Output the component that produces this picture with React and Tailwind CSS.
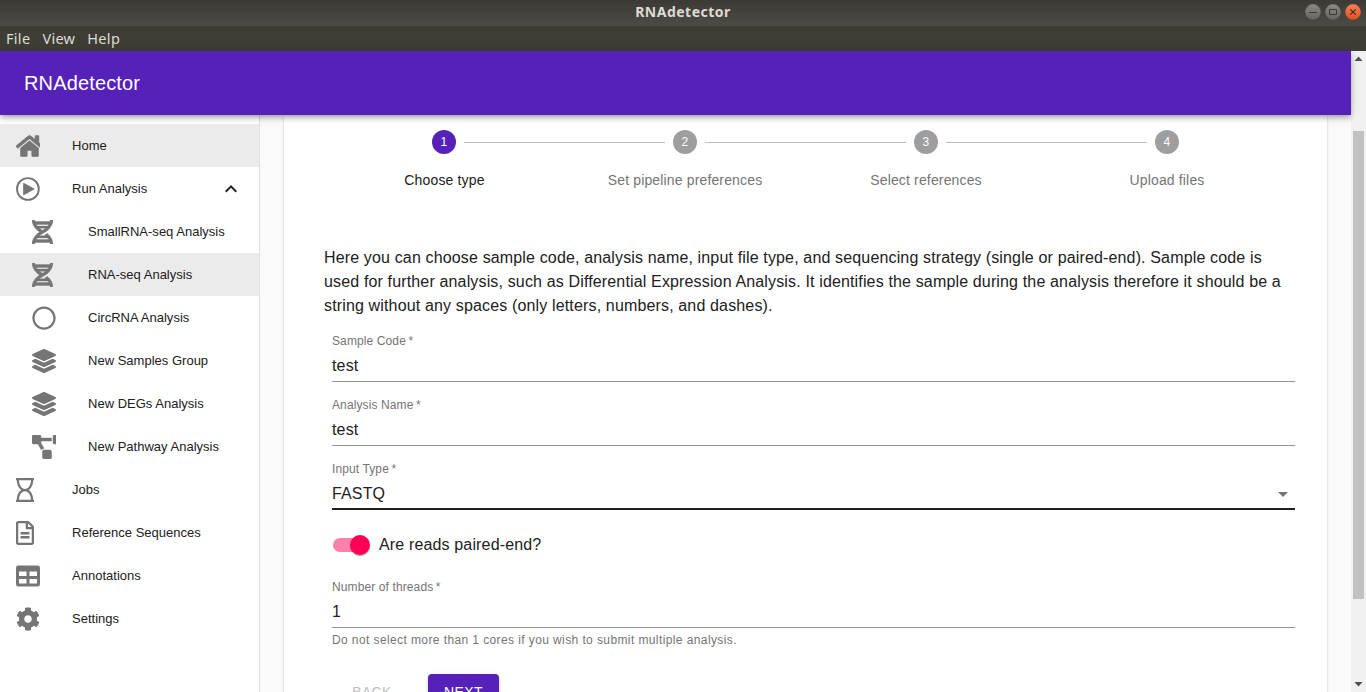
import React from "react";
import {
  FaHome,
  FaDna,
  FaRegCircle,
  FaLayerGroup,
  FaProjectDiagram,
  FaRegHourglass,
  FaRegFileAlt,
  FaTable,
  FaCog,
} from "react-icons/fa";

function PlayCircle({ className }) {
  return (
    <svg className={className} viewBox="0 0 24 24">
      <circle cx="11.9" cy="12" r="10.9" fill="none" stroke="currentColor" strokeWidth="1.9" />
      <path d="M7.8 6.5L17.8 12L7.8 17.5z" fill="currentColor" stroke="currentColor" strokeWidth="1.2" strokeLinejoin="round" />
    </svg>
  );
}

const NAV = [
  { label: "Home", Icon: FaHome, size: "w-[27px] stroke-[12]", active: true },
  { label: "Run Analysis", Icon: PlayCircle, size: "w-6", open: true },
  { label: "SmallRNA-seq Analysis", Icon: FaDna, size: "w-[21px] stroke-[8]", nested: true },
  { label: "RNA-seq Analysis", Icon: FaDna, size: "w-[21px] stroke-[8]", nested: true, active: true },
  { label: "CircRNA Analysis", Icon: FaRegCircle, size: "w-6", nested: true },
  { label: "New Samples Group", Icon: FaLayerGroup, size: "w-6", nested: true },
  { label: "New DEGs Analysis", Icon: FaLayerGroup, size: "w-6", nested: true },
  { label: "New Pathway Analysis", Icon: FaProjectDiagram, size: "w-[30px] stroke-[10]", nested: true },
  { label: "Jobs", Icon: FaRegHourglass, size: "w-[18px]" },
  { label: "Reference Sequences", Icon: FaRegFileAlt, size: "w-[18px]" },
  { label: "Annotations", Icon: FaTable, size: "w-6" },
  { label: "Settings", Icon: FaCog, size: "w-6" },
];

const STEPS = ["Choose type", "Set pipeline preferences", "Select references", "Upload files"];

function TitleBar() {
  return (
    <div className="grid h-[26px] shrink-0 grid-cols-[1fr_auto_1fr] items-center bg-linear-to-b from-[#3b3a36] to-[#4d4b45] font-['Noto_Sans',sans-serif]">
      <span />
      <span className="pb-[2px] text-[14px] leading-5 font-bold tracking-[0.5px] text-[#dfdbd2]">RNAdetector</span>
      <div className="flex justify-end gap-1 pr-[5px] pb-[2px]">
        <svg className="size-4" viewBox="0 0 16 16">
          <defs>
            <linearGradient id="grey" x1="0" y1="0" x2="0" y2="1">
              <stop offset="0" stopColor="#8b8982" />
              <stop offset="1" stopColor="#66645e" />
            </linearGradient>
            <linearGradient id="orange" x1="0" y1="0" x2="0" y2="1">
              <stop offset="0" stopColor="#f47f58" />
              <stop offset="1" stopColor="#e2501f" />
            </linearGradient>
          </defs>
          <circle cx="8" cy="8" r="7.9" fill="url(#grey)" stroke="#3a3935" strokeWidth=".2" />
          <path d="M4 8.5h8" stroke="#3b3a36" />
        </svg>
        <svg className="size-4" viewBox="0 0 16 16">
          <circle cx="8" cy="8" r="7.9" fill="url(#grey)" stroke="#3a3935" strokeWidth=".2" />
          <path d="M4.5 5.5h7v5h-7z" fill="none" stroke="#3b3a36" />
        </svg>
        <svg className="size-4" viewBox="0 0 16 16">
          <circle cx="8" cy="8" r="7.9" fill="url(#orange)" stroke="#3a3935" strokeWidth=".2" />
          <path d="M5.3 5.3l5.4 5.4M10.7 5.3l-5.4 5.4" stroke="#48291c" strokeWidth="1.2" />
        </svg>
      </div>
    </div>
  );
}

function MenuBar() {
  return (
    <div className="flex h-[25px] shrink-0 items-center gap-3 bg-[#3d3d36] pl-[6px] font-['Noto_Sans',sans-serif] text-[14.5px] leading-[23px] tracking-[0.3px] text-[#dfdbd2]">
      <span>File</span>
      <span>View</span>
      <span>Help</span>
    </div>
  );
}

function NavItem({ label, Icon, size, nested, active, open }) {
  return (
    <li className={`flex h-[43px] items-center pr-4 ${nested ? "pl-8" : "pl-4"} ${active ? "bg-[#ebebeb]" : ""}`}>
      <span className="mr-8 flex h-6 w-6 shrink-0 overflow-hidden text-[#757575]">
        <Icon className={`h-6 shrink-0 ${size}`} />
      </span>
      <span className="flex-1 whitespace-nowrap">{label}</span>
      {open && (
        <svg className="size-6" viewBox="0 0 24 24" fill="currentColor">
          <path d="M12 8l-6 6 1.41 1.41L12 10.83l4.59 4.58L18 14z" />
        </svg>
      )}
    </li>
  );
}

function Stepper() {
  return (
    <ol className="-ml-px flex w-[964px]">
      {STEPS.map((label, i) => (
        <li key={label} className="flex w-[241px] flex-col items-center">
          <div className="flex w-full items-center gap-2">
            <span className={`h-px flex-1 ${i > 0 ? "bg-[#bdbdbd]" : ""}`} />
            <span
              className={`flex size-6 items-center justify-center rounded-full pl-px text-[12px] text-white ${
                i === 0 ? "bg-[#5521b8]" : "bg-[#9e9e9e]"
              }`}
            >
              {i + 1}
            </span>
            <span className={`h-px flex-1 ${i < 3 ? "bg-[#bdbdbd]" : ""}`} />
          </div>
          <span className={`mt-4 text-[14px] leading-5 tracking-[0.15px] ${i === 0 ? "pl-[2px] text-[#212121]" : "pl-px text-[#757575]"}`}>
            {label}
          </span>
        </li>
      ))}
    </ol>
  );
}

function Field({ label, value, focused, select }) {
  return (
    <div className={`flex h-12 flex-col ${focused ? "border-b-2 border-[#212121]" : "border-b border-[#949494]"}`}>
      <span className="h-4 text-[12px] leading-[14px] tracking-[0.1125px] text-[#757575]">
        {label}
        <span className="ml-[2.5px]">*</span>
      </span>
      <div className="mt-[6px] flex items-center justify-between leading-5">
        <span>{value}</span>
        {select && (
          <svg className="-my-1 size-6 text-[#757575]" viewBox="0 0 24 24" fill="currentColor">
            <path d="M7 10l5 5 5-5z" />
          </svg>
        )}
      </div>
    </div>
  );
}

function Scrollbar() {
  return (
    <div className="flex w-[15px] shrink-0 flex-col items-center bg-[#f1f1f1]">
      <svg className="h-[15px] w-[15px] shrink-0" viewBox="0 0 15 15" fill="#505050">
        <path d="M3.5 10l4-4.5 4 4.5z" />
      </svg>
      <div className="mt-[65px] h-[468px] w-[11px] bg-[#c1c1c1]" />
      <svg className="mt-auto h-[15px] w-[15px] shrink-0" viewBox="0 0 15 15" fill="#505050">
        <path d="M3.5 5l4 4.5 4-4.5z" />
      </svg>
    </div>
  );
}

export default function App() {
  return (
    <div className="flex h-[692px] w-[1366px] flex-col overflow-hidden font-['Liberation_Sans',Arial,sans-serif] text-[#212121]">
      <TitleBar />
      <MenuBar />
      <div className="flex min-h-0 flex-1">
        <div className="flex min-w-0 flex-1 flex-col">
          <header className="relative z-10 flex h-16 shrink-0 items-center bg-[#5521b8] pl-6 text-[20px] tracking-[0.15px] text-white shadow-[0_2px_4px_-1px_rgba(0,0,0,0.2),0_4px_5px_0_rgba(0,0,0,0.14),0_1px_10px_0_rgba(0,0,0,0.12)]">
            RNAdetector
          </header>
          <div className="flex min-h-0 flex-1">
            <nav className="w-[260px] shrink-0 border-r border-[#e0e0e0] bg-white pt-[9px] text-[13px] tracking-[0.01px]">
              <ul>
                {NAV.map((item) => (
                  <NavItem key={item.label} {...item} />
                ))}
              </ul>
            </nav>
            <main className="min-w-0 flex-1 overflow-hidden bg-[#fafafa] px-6">
              <div className="h-[640px] bg-white pt-[15px] pr-8 pl-10 text-[16px] tracking-[0.15px] shadow-[0_2px_1px_-1px_rgba(0,0,0,0.2),0_1px_1px_0_rgba(0,0,0,0.14),0_1px_3px_0_rgba(0,0,0,0.12)]">
                <Stepper />
                <p className="mt-14 leading-6">
                  Here you can choose sample code, analysis name, input file type, and sequencing strategy (single or
                  paired-end). Sample code is used for further analysis, such as Differential Expression Analysis. It
                  identifies the sample during the analysis therefore it should be a string without any spaces (only
                  letters, numbers, and dashes).
                </p>
                <div className="mt-4 flex flex-col gap-4 pl-2">
                  <Field label="Sample Code" value="test" />
                  <Field label="Analysis Name" value="test" />
                  <Field label="Input Type" value="FASTQ" focused select />
                </div>
                <div className="mt-4 flex h-[38px] items-center gap-[9px] pl-[9px]">
                  <span className="flex h-[14px] w-[37px] items-center justify-end rounded-full bg-linear-to-r from-[#ff80ab] from-80% to-transparent to-80%">
                    <span className="size-5 shrink-0 rounded-full bg-[#ff0057] shadow-[0_2px_1px_-1px_rgba(0,0,0,0.2),0_1px_1px_0_rgba(0,0,0,0.14),0_1px_3px_0_rgba(0,0,0,0.12)]" />
                  </span>
                  <span>Are reads paired-end?</span>
                </div>
                <div className="mt-4 pl-2">
                  <Field label="Number of threads" value="1" />
                  <p className="mt-[2px] text-[12px] leading-5 tracking-[0.4px] text-[#757575]">
                    Do not select more than 1 cores if you wish to submit multiple analysis.
                  </p>
                </div>
                <div className="mt-6 flex gap-5 pl-3 text-[14px] tracking-[0.4px]">
                  <button className="h-9 w-[72px] rounded text-[#bdbdbd]">BACK</button>
                  <button className="h-9 w-[71px] rounded bg-[#5521b8] text-white shadow-[0_3px_1px_-2px_rgba(0,0,0,0.2),0_2px_2px_0_rgba(0,0,0,0.14),0_1px_5px_0_rgba(0,0,0,0.12)]">
                    NEXT
                  </button>
                </div>
              </div>
            </main>
          </div>
        </div>
        <Scrollbar />
      </div>
    </div>
  );
}
